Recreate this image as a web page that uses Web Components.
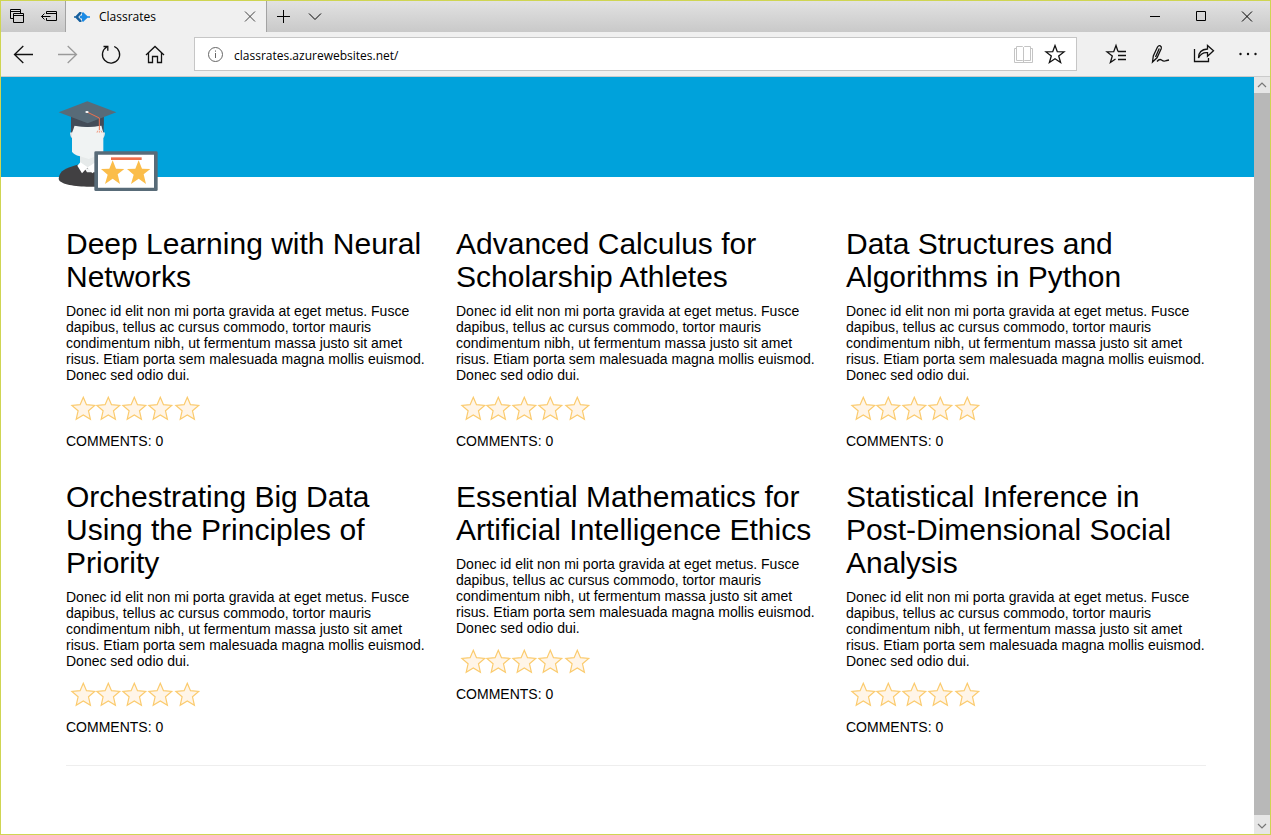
<!DOCTYPE html>
<html lang="en">
<head>
<meta charset="utf-8">
<title>Classrates</title>
<style>
  html, body { height: 100%; margin: 0; }
  body { font-family: "Liberation Sans", Arial, sans-serif; font-size: 14px; line-height: 16px; color: #000; background: #fff; }
</style>
</head>
<body>
<browser-window>
  <tab-strip slot="chrome">Classrates</tab-strip>
  <nav-bar slot="chrome" url="classrates.azurewebsites.net/"></nav-bar>
  <site-banner></site-banner>
  <class-list>
    <class-card comments="0">Deep Learning with Neural Networks</class-card>
    <class-card comments="0">Advanced Calculus for Scholarship Athletes</class-card>
    <class-card comments="0">Data Structures and Algorithms in Python</class-card>
    <class-card comments="0">Orchestrating Big Data Using the Principles of Priority</class-card>
    <class-card comments="0">Essential Mathematics for Artificial Intelligence Ethics</class-card>
    <class-card comments="0">Statistical Inference in Post-Dimensional Social Analysis</class-card>
  </class-list>
</browser-window>

<script>
const define = (name, html, setup) => {
  const template = document.createElement('template');
  template.innerHTML = html;
  customElements.define(name, class extends HTMLElement {
    constructor() {
      super();
      this.attachShadow({ mode: 'open' }).append(template.content.cloneNode(true));
    }
    connectedCallback() { if (setup) setup(this, this.shadowRoot); }
  });
};

const ICONS = {
  tabs: '<path d="M8 13.5H5.5v-9h10V8M5.5 6.5h10M8.5 8.5h10v9h-10zM8.5 10.5h10"/>',
  aside: '<path d="M9.5 9V6.5h10v9h-10V13M9.5 8.5h10M4.5 11.5h9M7.5 8.5l-3 3 3 3"/>',
  close: '<path d="M7 6.5l10 10M17 6.5l-10 10"/>',
  plus: '<path d="M12.500 5v13M6 11.5h13"/>',
  down: '<path d="M6 8.5l6 6 6-6"/>',
  minimize: '<path d="M7 11.5h10"/>',
  maximize: '<path d="M7.5 6.5h9v9h-9z"/>',
  back: '<path d="M22 12.5H3.5M12.3 4l-8.800 8.5 8.800 8.5"/>',
  forward: '<path d="M3 12.5h18.5M12.7 4l8.800 8.5-8.800 8.5"/>',
  refresh: '<path d="M15.2 4.5a8.600 8.600 0 1 1-7.400.5M4.5 4.500h4.300v4.300"/>',
  home: '<path d="M3 13l9-8.500 9 8.500M5.5 11v9.500h4V14.5h5v6h4V11"/>',
  info: '<circle cx="12.5" cy="12.5" r="7"/><path d="M12.5 11v5M12.5 8.500v1.200"/>',
  reader: '<path d="M5.5 4.5h6l1 1 1-1h6v14h-6l-1 1-1-1h-6zM12.5 5.5v15M5.5 6.5h-2v14h18v-14h-2"/>',
  star: '<path d="M12 3.5l2.300 6.2 6.700.2-5.300 4.1 1.900 6.5-5.600-3.800-5.600 3.800 1.900-6.500L3 9.900l6.700-.2z"/>',
  favorites: '<path d="M14 9.5l-2-6-2.300 6.200-6.700.2 5.300 4.100-1.900 6.500 5.100-3.500M14 9.5h8M14 13.5h8M14 17.5h8"/>',
  note: '<path d="M4.5 20l.8-6L9.500 5q1.200-1.800 2.800-1.100 1.600.9.900 2.900L9 15.800zM11.300 6.500L7.500 15M9 19.500q2.500-3 4.500-1.500t3.500 1 4-1"/>',
  share: '<path d="M2.500 7v12.500h14V16M6.500 16q0-8.500 9-9V3.500l6 5.300-6 5.500v-3.600q-6-.7-9 5.300z"/>',
  more: '<g fill="currentColor" stroke="none"><circle cx="4.5" cy="12" r="1.2"/><circle cx="12" cy="12" r="1.2"/><circle cx="19.5" cy="12" r="1.2"/></g>',
  up: '<path d="M8 14l4-4 4 4"/>',
  scrolldown: '<path d="M8 11l4 4 4-4"/>'
};

define('line-icon', `
  <style>
    :host { display: block; flex: none; width: 24px; height: 24px; }
    svg { display: block; width: 24px; height: 24px; fill: none; stroke: currentColor; stroke-width: var(--stroke, 1.2); }
  </style><svg viewBox="0 0 24 24" aria-hidden="true"></svg>`,
  (host, root) => { root.querySelector('svg').innerHTML = ICONS[host.getAttribute('name')]; });

define('tab-strip', `
  <style>
    :host { display: flex; height: 31px; background: linear-gradient(#e2e2e2, #c9c9c9); font-family: "Open Sans", "Noto Sans", sans-serif; font-size: 12px; }
    button { display: flex; justify-content: center; width: 32px; height: 31px; padding: 4px 0 3px; border: 0; background: none; color: #000; --stroke: 1; }
    .tab { display: flex; align-items: center; box-sizing: border-box; width: 202px; padding: 0 4px 0 8px; border: solid #a3a3a3; border-width: 0 1px; background: #f0f0f0; }
    .tab button { width: 24px; margin-left: auto; color: #444; }
    .favicon { width: 16px; height: 16px; margin-right: 9px; }
    .window { display: flex; margin-left: auto; }
    .window button { width: 46px; }
  </style>
  <button aria-label="Tabs you've set aside"><line-icon name="tabs"></line-icon></button>
  <button aria-label="Set these tabs aside"><line-icon name="aside"></line-icon></button>
  <div class="tab">
    <svg class="favicon" viewBox="0 0 16 16" aria-hidden="true">
      <path d="M0 7.300h1.500L5.500 3h2v1.500L4.300 8l3.200 3.500V13h-2l-4-4.300H0z" fill="#155f9e"/>
      <path d="M9 3l4.500 4.300H16v1.400h-2.500L9 13l-1-1V9.500H6.500L5.500 8l1-1.500H8V4z" fill="#1a8ae5"/>
    </svg>
    <span><slot></slot></span>
    <button aria-label="Close tab"><line-icon name="close"></line-icon></button>
  </div>
  <button aria-label="New tab"><line-icon name="plus"></line-icon></button>
  <button aria-label="Show tab previews"><line-icon name="down"></line-icon></button>
  <div class="window">
    <button aria-label="Minimize"><line-icon name="minimize"></line-icon></button>
    <button aria-label="Maximize"><line-icon name="maximize"></line-icon></button>
    <button aria-label="Close"><line-icon name="close"></line-icon></button>
  </div>`);

define('nav-bar', `
  <style>
    :host { display: flex; align-items: center; height: 44px; border-bottom: 1px solid #cbcbcb; background: #f0f0f0; }
    button { display: flex; align-items: center; justify-content: center; width: 44px; height: 44px; padding: 0; border: 0; background: none; color: #111; --stroke: 1.3; }
    button:disabled { color: #9a9a9a; }
    .address { display: flex; align-items: center; flex: 1; box-sizing: border-box; min-width: 0; height: 34px; margin: 0 17px; padding: 0 5px 0 8px; border: 1px solid #c6c6c6; background: #fff; }
    .address button { width: 32px; height: 32px; }
    .address button.info { width: 24px; color: #666; --stroke: 1; }
    .address button.reader { --stroke: 1; color: #c4c4c4; }
    input { flex: 1; min-width: 0; height: 26px; padding: 2px 0 0 7px; box-sizing: border-box; border: 0; outline: 0; background: none; font: 12px/24px "Open Sans", "Noto Sans", sans-serif; color: #000; }
  </style>
  <button aria-label="Back"><line-icon name="back"></line-icon></button>
  <button aria-label="Forward" disabled><line-icon name="forward"></line-icon></button>
  <button aria-label="Refresh"><line-icon name="refresh"></line-icon></button>
  <button aria-label="Home"><line-icon name="home"></line-icon></button>
  <div class="address">
    <button class="info" aria-label="Site information"><line-icon name="info"></line-icon></button>
    <input type="text" aria-label="Address" spellcheck="false">
    <button class="reader" aria-label="Reading view" disabled><line-icon name="reader"></line-icon></button>
    <button aria-label="Add to favorites"><line-icon name="star"></line-icon></button>
  </div>
  <button aria-label="Hub"><line-icon name="favorites"></line-icon></button>
  <button aria-label="Add notes"><line-icon name="note"></line-icon></button>
  <button aria-label="Share"><line-icon name="share"></line-icon></button>
  <button aria-label="Settings and more"><line-icon name="more"></line-icon></button>`,
  (host, root) => { root.querySelector('input').value = host.getAttribute('url'); });

define('scroll-rail', `
  <style>
    :host { display: flex; flex-direction: column; flex: none; width: 16px; background: #e6e6e6; }
    button { display: flex; align-items: center; justify-content: center; overflow: hidden; width: 16px; height: 16px; padding: 0; border: 0; background: #e6e6e6; color: #777; }
    button:last-child { height: 19px; }
    .thumb { flex: 1; background: #b8b8b8; }
  </style>
  <button aria-label="Scroll up"><line-icon name="up"></line-icon></button>
  <div class="thumb"></div>
  <button aria-label="Scroll down"><line-icon name="scrolldown"></line-icon></button>`);

define('browser-window', `
  <style>
    :host { display: flex; flex-direction: column; box-sizing: border-box; height: 100vh; border: 1px solid #cfd552; }
    .view { display: flex; flex: 1; min-height: 0; }
    .page { flex: 1; min-width: 0; overflow: hidden; background: #fff; }
  </style>
  <slot name="chrome"></slot>
  <div class="view"><div class="page"><slot></slot></div><scroll-rail></scroll-rail></div>`);

define('site-banner', `
  <style>
    :host { display: block; position: relative; z-index: 1; box-sizing: border-box; height: 100px; padding: 8px 39px 0; background: #00a2db; }
    svg { display: block; width: 140px; height: 120px; }
  </style>
  <svg viewBox="0 0 420 360" role="img" aria-label="Classrates">
    <path d="M56 282C57 256 78 249 112 239h58v66H140C96 304 58 296 56 282z" fill="#414042"/>
    <path d="M120 205h45v35l-15 14-30-14z" fill="#e6eaea"/>
    <path d="M122 232l20 20 23-20v30h-24z" fill="#f2f4f4"/>
    <path d="M121 232l-9 10 14 23 17-18zM165 233l-22 14 14 18 9-9z" fill="#fff"/>
    <path d="M93 90h98v67H93z" fill="#434c58"/>
    <path d="M90 143q3-3 7 0v16q-6-1-7-16zM195 143q-3-3-7 0v16q6-1 7-16z" fill="#dfe5e6"/>
    <path d="M104 121q40 8 80 0 3 14 6 22v57q-4 8-22 14l-22 8-26-8q-20-6-24-14v-57q4-8 8-22z" fill="#f0f3f3"/>
    <path d="M94 96l49 19 48-19v25q-48 10-97 0z" fill="#434c58"/>
    <path d="M56 82l86-33 87 33-86 33z" fill="#586b78"/>
    <path d="M141 81l37 18v36" fill="none" stroke="#ef6f4c" stroke-width="3"/>
    <ellipse cx="141" cy="81" rx="5" ry="3" fill="#fff"/>
    <path d="M173 137l-2 6M178 137v6M183 137l3 6" stroke="#f39b80" stroke-width="3"/>
    <rect x="163" y="199" width="190" height="119" rx="4" fill="#586b78"/>
    <path d="M174 209h168v99H174z" fill="#fff"/>
    <path d="M213 217h92v8h-92z" fill="#ef6f4c"/>
    <g fill="#fbbd4a">
      <path d="M218 226l10 25 25 1-20 16 7 29-22-16-23 16 8-28-20-17 25-1z"/>
      <path d="M296 226l10 25 25 1-20 16 7 29-22-16-23 16 8-28-20-17 25-1z"/>
    </g>
  </svg>`);

define('star-rating', `
  <style>
    :host { display: block; height: 30px; }
    svg { display: block; width: 140px; height: 30px; fill: #fff5e8; stroke: #fbcb6e; stroke-width: 1.2; }
  </style>
  <svg viewBox="0 0 140 30" role="img" aria-label="Not rated yet"></svg>`,
  (host, root) => {
    root.querySelector('svg').innerHTML = [17.3, 42.3, 68.3, 94.3, 121.3].map(x =>
      `<path d="M${x} 4.200l3.200 7.500 8.200.7-6.200 5.400 1.900 8.500-7.100-4.300-7.100 4.300 1.900-8.500-6.200-5.400 8.200-.7z"/>`).join('');
  });

define('class-card', `
  <style>
    :host { display: block; }
    h2 { margin: 0 0 10px; font-size: 30px; font-weight: 400; line-height: 33px; }
    p { margin: 0 0 10px; }
    p:last-child { margin: 10px 0 0; }
  </style>
  <h2><slot></slot></h2>
  <p>Donec id elit non mi porta gravida at eget metus. Fusce dapibus, tellus ac cursus commodo, tortor mauris condimentum nibh, ut fermentum massa justo sit amet risus. Etiam porta sem malesuada magna mollis euismod. Donec sed odio dui.</p>
  <star-rating></star-rating>
  <p>COMMENTS: <span></span></p>`,
  (host, root) => { root.querySelector('span').textContent = host.getAttribute('comments'); });

define('class-list', `
  <style>
    :host { display: block; padding: 50px 48px 0 65px; }
    main { display: grid; grid-template-columns: repeat(3, minmax(0, 1fr)); gap: 31px 30px; }
    hr { margin: 30px 0 0; border: 0; border-top: 1px solid #eee; }
  </style>
  <main><slot></slot></main>
  <hr>`);
</script>
</body>
</html>
